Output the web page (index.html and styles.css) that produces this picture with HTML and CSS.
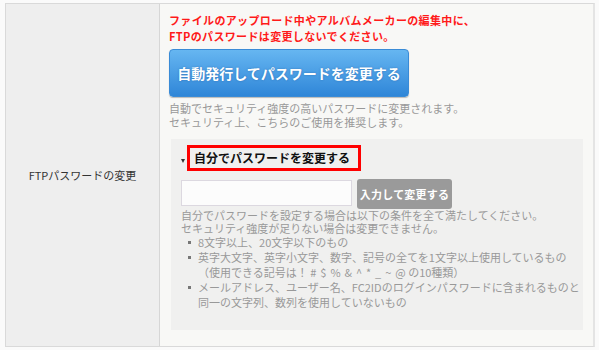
FILE: index.html
```html
<!DOCTYPE html>
<html lang="ja">
<head>
<meta charset="utf-8">
<link rel="stylesheet" href="styles.css">
</head>
<body>
<div class="row">
  <div class="label">FTPパスワードの変更</div>
  <div class="content">
    <p class="warn">ファイルのアップロード中やアルバムメーカーの編集中に、<br>FTPのパスワードは変更しないでください。</p>
    <button class="auto-btn">自動発行してパスワードを変更する</button>
    <p class="note">自動でセキュリティ強度の高いパスワードに変更されます。<br>セキュリティ上、こちらのご使用を推奨します。</p>
    <div class="panel">
      <div class="summary">
        <span class="tri"></span>
        <span class="summary-title">自分でパスワードを変更する</span>
      </div>
      <div class="form-row">
        <input class="pw-input" type="text">
        <button class="manual-btn">入力して変更する</button>
      </div>
      <p class="desc">自分でパスワードを設定する場合は以下の条件を全て満たしてください。<br>セキュリティ強度が足りない場合は変更できません。</p>
      <ul class="rules">
        <li>8文字以上、20文字以下のもの</li>
        <li>英字大文字、英字小文字、数字、記号の全てを1文字以上使用しているもの<br>（使用できる記号は！ <span class="symbols"># $ % &amp; ^ * _ ~ @</span> の10種類）</li>
        <li>メールアドレス、ユーザー名、FC2IDのログインパスワードに含まれるものと<br>同一の文字列、数列を使用していないもの</li>
      </ul>
    </div>
  </div>
</div>
</body>
</html>
```
FILE: styles.css
```css
html, body {
  margin: 0;
  padding: 0;
  background: #fafafa;
}
body {
  font-family: "Noto Sans CJK JP", "Noto Sans", sans-serif;
  font-size: 11px;
  color: #333;
}
.row {
  display: flex;
  box-sizing: border-box;
  margin: 3px 0 0 5px;
  width: 590px;
  height: 344px;
  border-top: 1px solid #d9d9d9;
  border-left: 1px solid #d9d9d9;
  border-bottom: 1px solid #d9d9d9;
  border-right: 2px solid #e4e4e4;
}
.label {
  flex: 0 0 153px;
  background: #eeeeee;
  border-right: 1px solid #d6d6d6;
  display: flex;
  align-items: center;
  justify-content: center;
  font-size: 11px;
  line-height: 14px;
  color: #333;
}
.content {
  flex: 1;
  background: #f8f8f6;
  padding: 8px 0 0 9px;
}
.warn {
  margin: 0;
  color: #ff1a1a;
  font-weight: bold;
  font-size: 11px;
  letter-spacing: 0.35px;
  line-height: 16px;
}
.auto-btn {
  display: block;
  margin: 5px 0 0 0;
  width: 240px;
  height: 48px;
  border: 1px solid #3a8bd6;
  border-radius: 4px;
  background: linear-gradient(#66b6f1, #2f86d8);
  box-shadow: 0 1px 1px rgba(0,0,0,0.25);
  color: #fff;
  font-family: "Noto Sans CJK JP", sans-serif;
  font-weight: bold;
  font-size: 14px;
  text-shadow: 0 0 2px rgba(0,40,100,0.35);
  padding: 0;
  white-space: nowrap;
}
.note {
  margin: 4px 0 0 0;
  color: #999;
  font-size: 11px;
  line-height: 14px;
}
.panel {
  margin: 10px 0 0 2px;
  width: 412px;
  box-sizing: border-box;
  background: #f0f0ef;
  padding: 6px 0 20px 10px;
}
.summary {
  display: flex;
  align-items: center;
}
.tri {
  width: 0;
  height: 0;
  border-left: 2.5px solid transparent;
  border-right: 2.5px solid transparent;
  border-top: 4px solid #333;
  margin: 6px 2px 0 0;
}
.summary-title {
  display: inline-block;
  box-sizing: border-box;
  height: 26px;
  border: 3px solid #ff0000;
  padding: 0 8px 0 4px;
  font-size: 12px;
  line-height: 20px;
  font-weight: bold;
  color: #111;
}
.form-row {
  display: flex;
  align-items: flex-start;
  gap: 5px;
  margin-top: 8px;
}
.pw-input {
  box-sizing: border-box;
  width: 171px;
  height: 26px;
  margin: 1px 0 0 0;
  border: 1px solid #dcd8e0;
  background: #fcfcfc;
  padding: 0 4px;
}
.manual-btn {
  box-sizing: border-box;
  width: 95px;
  height: 30px;
  border: none;
  border-radius: 3px;
  background: #9a9a9a;
  color: #fff;
  font-family: "Noto Sans CJK JP", sans-serif;
  font-weight: bold;
  font-size: 11px;
  letter-spacing: 0.2px;
  white-space: nowrap;
  padding: 0;
}
.desc {
  margin: 0;
  color: #999;
  font-size: 11px;
  line-height: 13px;
}
.rules {
  list-style: none;
  margin: 0;
  padding: 0 0 0 17px;
  color: #999;
  font-size: 11px;
  line-height: 15px;
}
.rules li {
  position: relative;
}
.rules li::before {
  content: "";
  position: absolute;
  left: -10px;
  top: 6px;
  width: 3px;
  height: 3px;
  background: #777;
}
.symbols {
  word-spacing: 1.5px;
}
```
